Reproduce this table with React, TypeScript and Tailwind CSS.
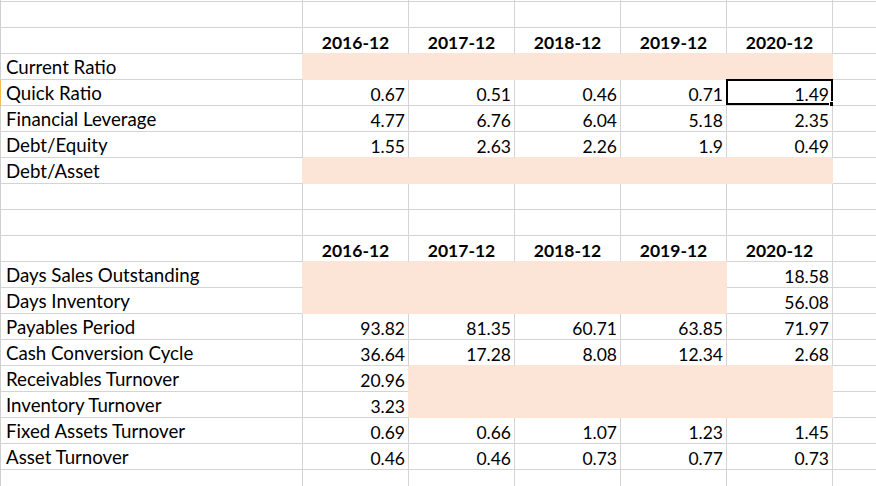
import React from "react";

type Row = {
  label?: string;
  header?: boolean;
  vals?: (string | null)[];
  pink?: boolean[];
  selected?: boolean;
};

const YEARS = ["2016-12", "2017-12", "2018-12", "2019-12", "2020-12"];
const NONE = [false, false, false, false, false];
const ALL = [true, true, true, true, true];

const ROWS: Row[] = [
  {},
  { header: true },
  { label: "Current Ratio", pink: ALL },
  { label: "Quick Ratio", vals: ["0.67", "0.51", "0.46", "0.71", "1.49"], selected: true },
  { label: "Financial Leverage", vals: ["4.77", "6.76", "6.04", "5.18", "2.35"] },
  { label: "Debt/Equity", vals: ["1.55", "2.63", "2.26", "1.9", "0.49"] },
  { label: "Debt/Asset", pink: ALL },
  {},
  {},
  { header: true },
  { label: "Days Sales Outstanding", vals: [null, null, null, null, "18.58"], pink: [true, true, true, true, false] },
  { label: "Days Inventory", vals: [null, null, null, null, "56.08"], pink: [true, true, true, true, false] },
  { label: "Payables Period", vals: ["93.82", "81.35", "60.71", "63.85", "71.97"] },
  { label: "Cash Conversion Cycle", vals: ["36.64", "17.28", "8.08", "12.34", "2.68"] },
  { label: "Receivables Turnover", vals: ["20.96", null, null, null, null], pink: [false, true, true, true, true] },
  { label: "Inventory Turnover", vals: ["3.23", null, null, null, null], pink: [false, true, true, true, true] },
  { label: "Fixed Assets Turnover", vals: ["0.69", "0.66", "1.07", "1.23", "1.45"] },
  { label: "Asset Turnover", vals: ["0.46", "0.46", "0.73", "0.77", "0.73"] },
  {},
];

function pinkAt(r: number, c: number): boolean {
  if (r < 0 || r >= ROWS.length) return false;
  if (c < 1 || c > 5) return false;
  const p = ROWS[r].pink ?? NONE;
  return p[c - 1];
}

function Cell({
  r,
  c,
  top,
  children,
  align,
}: {
  r: number;
  c: number;
  top?: boolean;
  children?: React.ReactNode;
  align?: "left" | "right" | "center";
}) {
  const self = top ? false : pinkAt(r, c);
  const right = self || (!top && pinkAt(r, c + 1));
  const below = self || pinkAt(top ? 0 : r + 1, c);
  const width = c === 0 ? "w-[302px]" : c === 6 ? "flex-1" : "w-[106px]";
  const rightCls =
    c === 6 ? "" : right ? "border-r border-r-[#fce4d6]" : "border-r border-r-[#d4d4d4]";
  const bottomCls = below ? "border-b border-b-[#fce4d6]" : "border-b border-b-[#d4d4d4]";
  const h = top ? "h-[2px]" : "h-[26px] pb-[2px]";
  const bg = self ? "bg-[#fce4d6]" : "bg-white";
  const alignCls =
    align === "right"
      ? "justify-end pr-[3px]"
      : align === "center"
      ? "justify-center"
      : "justify-start pl-[5px]";
  return (
    <div
      className={`relative flex shrink-0 items-end overflow-visible ${width} ${h} ${rightCls} ${bottomCls} ${bg} ${alignCls}`}
    >
      {children}
    </div>
  );
}

export default function App() {
  return (
    <div
      className="w-[876px] h-[486px] overflow-hidden bg-white text-black text-[18px] leading-none"
      style={{ fontFamily: "Lato, 'Open Sans', sans-serif" }}
    >
      <div className="flex">
        <div className="w-[1px] h-[2px] bg-[#cfcfcf] shrink-0" />
        {[0, 1, 2, 3, 4, 5, 6].map((c) => (
          <Cell key={c} r={-1} c={c} top />
        ))}
      </div>
      {ROWS.map((row, r) => (
        <div key={r} className="flex">
          <div
            className={`w-[1px] h-[26px] shrink-0 ${row.selected ? "bg-[#f2bd55]" : "bg-[#cfcfcf]"}`}
          />
          <Cell r={r} c={0}>
            {row.label ? (
              <span className="whitespace-nowrap text-[18.7px]">{row.label}</span>
            ) : null}
          </Cell>
          {[1, 2, 3, 4, 5].map((c) => {
            if (row.header) {
              return (
                <Cell key={c} r={r} c={c} align="center">
                  <span className="font-bold text-[17.5px]">{YEARS[c - 1]}</span>
                </Cell>
              );
            }
            const v = row.vals ? row.vals[c - 1] : null;
            return (
              <Cell key={c} r={r} c={c} align="right">
                {v ? <span className="text-[17.5px]">{v}</span> : null}
                {row.selected && c === 5 ? (
                  <div className="pointer-events-none absolute left-[-1px] top-[-1px] w-[107px] h-[26px] border-2 border-black">
                    <div className="absolute right-[-4px] bottom-[-4px] w-[6px] h-[6px] bg-black border border-white" />
                  </div>
                ) : null}
              </Cell>
            );
          })}
          <Cell r={r} c={6} />
        </div>
      ))}
    </div>
  );
}
